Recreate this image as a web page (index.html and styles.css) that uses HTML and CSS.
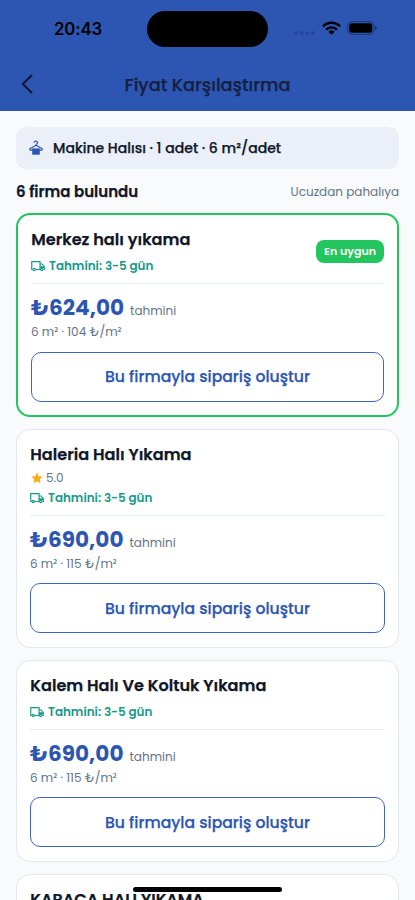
FILE: index.html
```html
<!DOCTYPE html>
<html lang="tr">
<head>
<meta charset="utf-8">
<meta name="viewport" content="width=device-width, initial-scale=1">
<title>Fiyat Karşılaştırma</title>
<link rel="stylesheet" href="styles.css">
</head>
<body>
<svg class="defs" aria-hidden="true">
  <symbol id="truck" viewBox="0 0 24 24">
    <path d="M8 18h8M3 18H1.300V4.500H15.500v13M15.500 8.500h3.700l3.500 4.500v5h-1.500" fill="none" stroke="currentColor" stroke-width="2"/>
    <path d="M15 12.500h8v3h-8z" fill="currentColor"/>
    <circle cx="5.500" cy="18" r="2" fill="none" stroke="currentColor" stroke-width="2"/>
    <circle cx="18.500" cy="18" r="2" fill="none" stroke="currentColor" stroke-width="2"/>
  </symbol>
</svg>
<div class="screen">
  <header class="header">
    <div class="status">
      <span class="time">20:43</span>
      <span class="island"></span>
      <span class="indicators">
        <span class="dots"><i></i><i></i><i></i><i></i></span>
        <svg class="wifi" viewBox="0 0 18 13"><g fill="none" stroke="#000" stroke-width="2.300"><path d="M.9 4.900a11.600 11.600 0 0 1 16.200 0"/><path d="M3.800 8a7.500 7.500 0 0 1 10.400 0"/></g><path d="M9 13l-2.900-3a4.200 4.200 0 0 1 5.800 0z"/></svg>
        <svg class="battery" viewBox="0 0 30 14"><rect x=".6" y=".6" width="26.400" height="12.800" rx="4" fill="none" stroke="#142a5c" stroke-opacity=".75"/><rect x="2.300" y="2.300" width="23" height="9.400" rx="2.600"/><path d="M28.200 4.900c1.900.5 1.900 3.700 0 4.200z" fill="#142a5c"/></svg>
      </span>
    </div>
    <div class="nav">
      <svg class="back" viewBox="0 0 12 20"><path d="M10.500 1.500L1.800 10l8.700 8.500" fill="none" stroke="#0f172a" stroke-width="2" stroke-linecap="round" stroke-linejoin="round"/></svg>
      <h1>Fiyat Karşılaştırma</h1>
    </div>
  </header>
  <main>
    <div class="chip">
      <svg class="hanger" viewBox="0 0 14 15"><path d="M5.100 2.700a1.700 1.500 0 1 1 2.700 1.200c-.6.4-.8.700-.8 1.400L1.300 8.600c-.9.600-.6 1.500.3 1.500h10.800c.9 0 1.200-.9.300-1.500L7 5.300" fill="none" stroke="#2d56b3" stroke-width="1.200" stroke-linejoin="round"/><path d="M3.200 8.400h7.600v6.300H3.200z" fill="#2d56b3"/></svg>
      <span>Makine Halısı · 1 adet · 6 m²/adet</span>
    </div>
    <div class="summary"><h2>6 firma bulundu</h2><span>Ucuzdan pahalıya</span></div>
    <section class="card best">
      <div class="top">
        <div>
          <h3>Merkez halı yıkama</h3>
          <p class="delivery"><svg><use href="#truck"/></svg><span>Tahmini: 3-5 gün</span></p>
        </div>
        <span class="badge">En uygun</span>
      </div>
      <div class="price"><strong>₺624,00</strong><span>tahmini</span></div>
      <p class="unit">6 m² · 104 ₺/m²</p>
      <button>Bu firmayla sipariş oluştur</button>
    </section>
    <section class="card rated">
      <div class="top">
        <div>
          <h3>Haleria Halı Yıkama</h3>
          <p class="rating"><svg viewBox="0 0 24 24"><path d="M12 1l3.300 7.500 8.100.8-6.100 5.400 1.800 8L12 18.500l-7.100 4.200 1.800-8L.6 9.300l8.100-.8z" fill="#fbae0b"/></svg><span>5.0</span></p>
          <p class="delivery"><svg><use href="#truck"/></svg><span>Tahmini: 3-5 gün</span></p>
        </div>
      </div>
      <div class="price"><strong>₺690,00</strong><span>tahmini</span></div>
      <p class="unit">6 m² · 115 ₺/m²</p>
      <button>Bu firmayla sipariş oluştur</button>
    </section>
    <section class="card">
      <div class="top">
        <div>
          <h3>Kalem Halı Ve Koltuk Yıkama</h3>
          <p class="delivery"><svg><use href="#truck"/></svg><span>Tahmini: 3-5 gün</span></p>
        </div>
      </div>
      <div class="price"><strong>₺690,00</strong><span>tahmini</span></div>
      <p class="unit">6 m² · 115 ₺/m²</p>
      <button>Bu firmayla sipariş oluştur</button>
    </section>
    <section class="card">
      <div class="top">
        <div>
          <h3>KARACA HALI YIKAMA</h3>
        </div>
      </div>
    </section>
  </main>
  <div class="home"></div>
</div>
</body>
</html>
```
FILE: styles.css
```css
* { box-sizing: border-box; margin: 0; padding: 0; }
body { background: #f8fafc; color: #0f172a; font-family: Poppins, Inter, sans-serif; }
.defs { display: none; }
.screen { position: relative; height: 900px; overflow: hidden; }

.header { height: 111px; background: #2d56b3; }
.status { display: grid; grid-template-columns: 147px 121px 1fr; height: 58px; align-items: center; }
.time { padding-left: 54px; font-family: Inter, sans-serif; font-size: 16.8px; font-weight: 600; letter-spacing: -.15px; color: #000; }
.island { height: 36px; border-radius: 18px; background: #000; }
.indicators { display: flex; align-items: center; padding-left: 26px; height: 28px; margin-top: -2px; }
.dots { display: flex; gap: 2px; margin: 10px 7px 0 0; }
.dots i { width: 3.8px; height: 3.8px; border-radius: 50%; background: #24479b; }
.wifi { width: 19px; height: 14px; margin-right: 6px; }
.battery { width: 30px; height: 14px; }
.nav { display: grid; grid-template-columns: 50px 1fr 50px; align-items: center; height: 53px; }
.back { width: 12px; height: 20px; margin: 0 0 2px 21px; }
h1 { text-align: center; font-size: 17.7px; font-weight: 500; line-height: 26px; white-space: nowrap; color: #14203f; }
h1, h2, h3, .chip, button { -webkit-text-stroke: .25px currentColor; }

main { padding: 16px 16px 0; }
.chip { display: flex; align-items: center; gap: 10px; height: 42px; padding-left: 13px; border-radius: 10px; background: #eaeff8; font-size: 14.05px; font-weight: 500; }
.hanger { width: 14px; height: 15px; margin-bottom: 1px; }
.summary { display: flex; justify-content: space-between; align-items: center; height: 44px; }
h2 { font-size: 15px; font-weight: 600; }
.summary span { padding-top: 1px; font-size: 12px; color: #64748b; }

.card { height: 202px; padding: 13px; margin-bottom: 12px; border: 1px solid #e2e8f0; border-radius: 14px; background: #fff; }
.card.rated { height: 218.5px; }
.card.best { height: 204px; border: 2px solid #22c55e; }
.top { display: flex; justify-content: space-between; align-items: center; padding-bottom: 8px; border-bottom: 1px solid #e5eaf1; }
h3 { padding-left: .3px; font-size: 16.12px; font-weight: 600; line-height: 23px; margin-bottom: -1px; white-space: nowrap; }
.delivery { display: flex; align-items: center; gap: 4px; margin-top: 7px; height: 18px; font-size: 11.95px; font-weight: 600; color: #16998a; }
.delivery svg { width: 14px; height: 14px; }
.rating { display: flex; align-items: center; gap: 3px; height: 18px; margin-top: 3.5px; font-size: 12px; color: #64748b; }
.rating svg { width: 12px; height: 12px; margin-left: 1px; }
.rating + .delivery { margin-top: 2px; }
.badge { height: 23px; padding: 0 8px; border-radius: 8px; background: #22c55e; color: #fff; font-size: 11.05px; font-weight: 600; line-height: 23px; }
.price { display: flex; align-items: baseline; gap: 6px; height: 30px; margin-top: 9px; line-height: 30px; }
.price strong { font-size: 21.6px; font-weight: 700; color: #2d56b3; }
.price span { padding-top: 1px; font-size: 12px; color: #64748b; }
.unit { height: 18px; font-size: 12.05px; line-height: 18px; color: #64748b; }
button { display: block; width: 100%; height: 50px; margin-top: 10.5px; border: 1px solid #3f66bc; border-radius: 10px; background: #fff; color: #2d56b3; font: 500 15.65px Poppins, Inter, sans-serif; }

.home { position: absolute; left: 133px; top: 887px; width: 149px; height: 5px; border-radius: 3px; background: #000; }
```
